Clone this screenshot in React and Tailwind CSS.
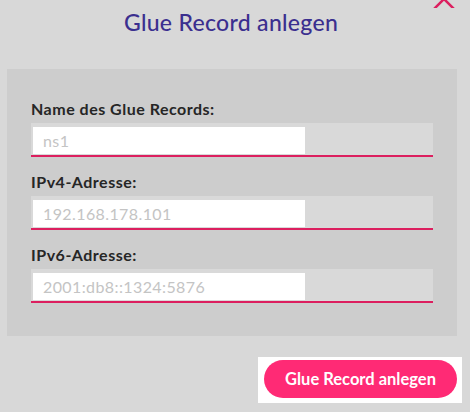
import React from 'react';

const fields = [
  { label: 'Name des Glue Records:', placeholder: 'ns1' },
  { label: 'IPv4-Adresse:', placeholder: '192.168.178.101' },
  { label: 'IPv6-Adresse:', placeholder: '2001:db8::1324:5876' },
];

const Field = ({ label, placeholder }) => (
  <div className="flex flex-col">
    <label className="text-[16px] font-bold text-[#262626] leading-[20px] tracking-[0.5px] mb-[4px]">{label}</label>
    <div className="w-[402px] h-[34px] bg-[#d9d9d9] border-b-2 border-[#dc1f5f] pt-[4px] pl-[2px]">
      <input
        className="w-[272px] h-[27px] bg-white pl-[10px] text-[16px] tracking-[0.4px] text-[#333] placeholder:text-[#c4c4c4] outline-none"
        placeholder={placeholder}
      />
    </div>
  </div>
);

export default function App() {
  return (
    <div className="w-[470px] h-[412px] bg-[#d8d8d8] relative overflow-hidden" style={{ fontFamily: 'Lato, "Open Sans", sans-serif' }}>
      <svg className="absolute left-[432px] top-[-12px]" width="24" height="20" viewBox="0 0 24 20">
        <path d="M1 0 L12 11 L23 0 M1 22 L12 11 L23 22" stroke="#dc1f5f" strokeWidth="2.5" fill="none" />
      </svg>
      <h1 className="text-center text-[23px] text-[#3b2f8f] font-medium leading-[30px] tracking-[0.3px] pt-[7px] pr-[8px]">Glue Record anlegen</h1>
      <div className="ml-[7px] mt-[32px] w-[450px] h-[267px] bg-[#cdcdcd] pt-[30px] pl-[24px] flex flex-col gap-[15px]">
        {fields.map(f => (
          <Field key={f.label} {...f} />
        ))}
      </div>
      <div className="flex justify-end pr-[8px] mt-[21px]">
        <div className="bg-white pt-[3px] pb-[5px] pl-[6px] pr-[5px]">
          <button className="w-[193px] h-[38px] rounded-[19px] bg-[#ff2a75] text-white font-bold text-[16.5px]">Glue Record anlegen</button>
        </div>
      </div>
    </div>
  );
}
